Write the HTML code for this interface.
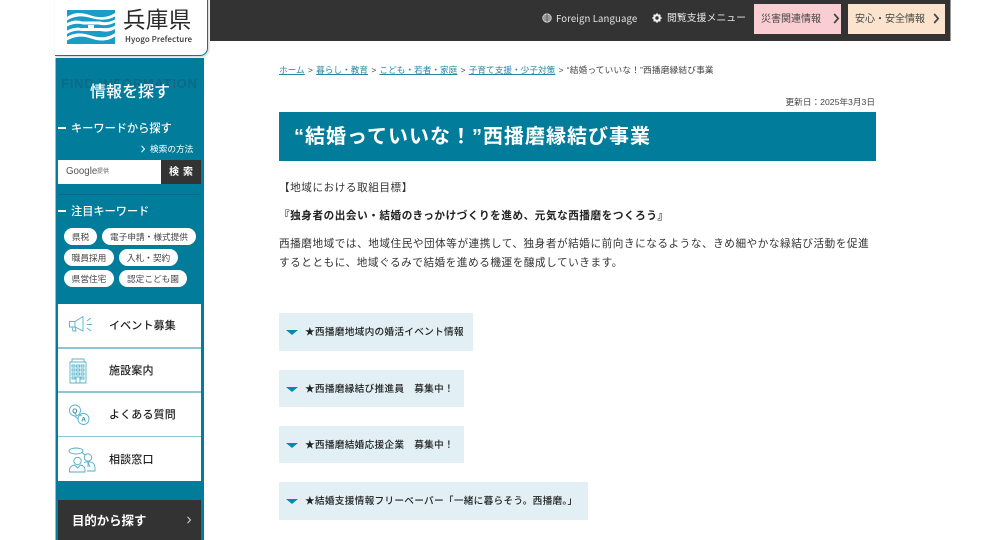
<!DOCTYPE html>
<html lang="ja"><head><meta charset="utf-8"><title>“結婚っていいな！”西播磨縁結び事業</title>
<style>
html,body{margin:0;padding:0;background:#fff}
body{width:1000px;height:540px;overflow:hidden;position:relative;font-family:"Liberation Sans","Noto Sans CJK JP",sans-serif;color:#333}
#w{position:absolute;left:0;top:0;width:1000px;height:540px;overflow:hidden;filter:blur(.3px)}
.a{position:absolute;white-space:nowrap;line-height:1}
.b{position:absolute}
.pill{position:absolute;height:17px;background:#fff;border-radius:9px;font-size:8.67px;line-height:18px;text-align:center;color:#444;white-space:nowrap}
.item{position:absolute;left:279px;background:#e2f0f5}
.item i{position:absolute;left:7px;top:17px;width:0;height:0;border-left:6px solid transparent;border-right:6px solid transparent;border-top:5px solid #0f87a8}
.item span{position:absolute;left:26px;top:1px;line-height:37px;font-size:9.7px;letter-spacing:.24px;font-weight:500;color:#222;white-space:nowrap}
.menu{position:absolute;left:58px;width:143px;background:#fff}
.menu span{position:absolute;left:51px;font-size:11px;font-weight:500;line-height:1;top:17px;color:#222;letter-spacing:.15px;white-space:nowrap}
.bc{left:279px;top:66px;font-size:8.67px;color:#444;word-spacing:.75px}
.bc u{color:#2a86a0}
.bc b{font-weight:400;letter-spacing:.18px}
p{margin:0}
.t{font-size:10.6px;letter-spacing:.56px;color:#333}
</style></head><body><div id="w">

<!-- top bar -->
<div class="b" style="left:210px;top:0;width:740px;height:41px;background:#333"></div>
<div class="b" style="left:950px;top:0;width:1px;height:41px;background:#999"></div>
<svg class="b" style="left:542px;top:13px" width="10" height="10" viewBox="0 0 10 10" fill="none" stroke="#ddd" stroke-width=".9"><circle cx="5" cy="5" r="4.2" fill="#bbb"/><path d="M1 5h8M1.600 3h6.800M1.600 7h6.800M5 .8v8.400" stroke="#333" stroke-width=".6"/></svg>
<div class="a" style="left:556px;top:14px;font-size:9.6px;letter-spacing:.1px;color:#e4e4e4;font-family:'Noto Sans CJK JP',sans-serif">Foreign Language</div>
<svg class="b" style="left:652px;top:13px" width="10" height="10" viewBox="0 0 10 10"><circle cx="5" cy="5" r="2.800" fill="none" stroke="#eee" stroke-width="2.200"/><path d="M5 .3v2M5 7.700v2M.3 5h2M7.700 5h2M1.700 1.700l1.400 1.400M6.900 6.900l1.400 1.400M8.300 1.700L6.900 3.100M3.100 6.900L1.700 8.300" stroke="#eee" stroke-width="1.500"/></svg>
<div class="a" style="left:667px;top:14px;font-size:9.9px;color:#e4e4e4">閲覧支援メニュー</div>
<div class="b" style="left:754px;top:4px;width:87px;height:30px;background:#f9cdd1"></div>
<div class="a" style="left:761px;top:15px;font-size:10px;color:#444">災害関連情報</div>
<svg class="b" style="left:833px;top:13px" width="7" height="11" viewBox="0 0 7 11" fill="none" stroke="#444" stroke-width="1.7"><path d="M1.200 1l4 4.500-4 4.500"/></svg>
<div class="b" style="left:848px;top:4px;width:97px;height:30px;background:#fbe3cd"></div>
<div class="a" style="left:855px;top:15px;font-size:10px;color:#444">安心・安全情報</div>
<svg class="b" style="left:933px;top:13px" width="7" height="11" viewBox="0 0 7 11" fill="none" stroke="#444" stroke-width="1.7"><path d="M1.200 1l4 4.500-4 4.500"/></svg>

<!-- sidebar -->
<div class="b" style="left:55px;top:58px;width:149px;height:482px;background:#017c9b"></div>
<div class="b" style="left:55px;top:58px;width:1px;height:482px;background:#7fc4d6"></div>

<!-- logo card -->
<div class="b" style="left:55px;top:-5px;width:152px;height:60px;background:#fff;border:solid #017c9b;border-width:0 1px 1px 0;border-radius:0 0 8px 0;box-shadow:1px 1px 2px rgba(0,0,0,.2)"></div>
<svg class="b" style="left:67px;top:10px" width="48" height="34" viewBox="0 0 48 34">
<rect width="48" height="34" fill="#1a9cc4"/>
<g fill="#fff">
<path d="M0 7C9 1 16 3 24 5.500S40 8 48 3V6.500C40 11 31 10 24 8S9 5 0 10.500Z"/>
<path d="M0 13C6 10 11 10 15 11.500H33C38 13 43 12 48 9.500V12.500C43 15 37 16 32 14.500H16C10 13 5 14 0 16.500Z"/>
<path d="M0 20.500C5 18 10 17 14 18H21V15H27V18H35C39 18.500 44 18 48 15.500V19C43 22 38 22 33 21H15C10 20 5 21 0 24Z"/>
<path d="M0 27C8 22 16 23 24 25.500S40 28.500 48 23V26.500C40 32 31 31 24 28.500S9 25.500 0 30.500Z"/>
</g></svg>
<div class="a" style="left:123px;top:10px;font-size:22.500px;letter-spacing:.4px;color:#2a2a2a;font-weight:400">兵庫県</div>
<div class="a" style="left:125px;top:36px;font-size:8px;color:#333;font-weight:500;font-family:'Noto Sans CJK JP',sans-serif;letter-spacing:.05px">Hyogo Prefecture</div>

<div class="a" style="left:61px;top:77px;font-size:13px;font-weight:700;letter-spacing:.75px;color:#0b6b86">FIND INFORMATION</div>
<div class="a" style="left:90px;top:85px;font-size:16px;font-weight:500;color:#fff">情報を探す</div>

<div class="b" style="left:58px;top:127px;width:8px;height:2px;background:#fff"></div>
<div class="a" style="left:71px;top:124px;font-size:11.2px;font-weight:500;color:#fff">キーワードから探す</div>
<svg class="b" style="left:140px;top:145px" width="6" height="8" viewBox="0 0 6 8" fill="none" stroke="#fff" stroke-width="1"><path d="M1.500 .8L4.500 4L1.500 7.200"/></svg>
<div class="a" style="left:150px;top:145px;font-size:8.67px;color:#fff">検索の方法</div>

<div class="b" style="left:58px;top:160px;width:103px;height:24px;background:#fff"></div>
<div class="b" style="left:161px;top:160px;width:40px;height:24px;background:#333"></div>
<div class="a" style="left:66px;top:167px;font-size:9.7px;color:#555">Google</div>
<div class="a" style="left:97px;top:169px;font-size:6px;color:#666">提供</div>
<div class="a" style="left:169px;top:168px;font-size:10px;font-weight:700;color:#fff;letter-spacing:.6px">検 索</div>
<div class="b" style="left:58px;top:194px;width:143px;height:1px;background:#0a6a85"></div>

<div class="b" style="left:58px;top:210px;width:8px;height:2px;background:#fff"></div>
<div class="a" style="left:71px;top:207px;font-size:11.2px;font-weight:500;color:#fff">注目キーワード</div>

<div class="pill" style="left:64px;top:228px;width:33px">県税</div>
<div class="pill" style="left:102px;top:228px;width:94px">電子申請・様式提供</div>
<div class="pill" style="left:64px;top:249px;width:50px">職員採用</div>
<div class="pill" style="left:119px;top:249px;width:59px">入札・契約</div>
<div class="pill" style="left:64px;top:270px;width:50px">県営住宅</div>
<div class="pill" style="left:119px;top:270px;width:68px">認定こども園</div>

<div class="b" style="left:58px;top:347px;width:143px;height:134px;background:#8cc6d4"></div>
<div class="menu" style="top:304px;height:43px"><span>イベント募集</span></div>
<div class="menu" style="top:349px;height:42px"><span>施設案内</span></div>
<div class="menu" style="top:393px;height:43px"><span>よくある質問</span></div>
<div class="menu" style="top:437px;height:44px"><span style="top:18px">相談窓口</span></div>

<svg class="b" style="left:68px;top:315px" width="26" height="20" viewBox="0 0 26 20" fill="none" stroke="#57b3ca" stroke-width=".9"><path d="M1.500 6.500H7L15 1.500V16L7 12H1.500Z"/><path d="M7 6.500V12M4 12L5 16H8L7 12"/><path d="M19 6L23 3M19 9.500H24M19 13L23 16"/></svg>
<svg class="b" style="left:69px;top:358px" width="18" height="26" viewBox="0 0 18 26" fill="none" stroke="#57b3ca" stroke-width=".9"><path d="M1 4V25H17V4ZM3 4V1H15V4"/><path d="M3 7h3v2H3zM7.500 7h3v2h-3zM12 7h3v2h-3zM3 11h3v2H3zM7.500 11h3v2h-3zM12 11h3v2h-3zM3 15h3v2H3zM7.500 15h3v2h-3zM12 15h3v2h-3zM3 19h3v2H3zM7 25v-6h4v6M12 19h3v2h-3z"/></svg>
<svg class="b" style="left:68px;top:404px" width="23" height="22" viewBox="0 0 23 22" fill="none" stroke="#57b3ca" stroke-width=".9"><circle cx="7" cy="6.500" r="5.500"/><path d="M11 11L14 12" /><circle cx="15.500" cy="15" r="5.500"/><path d="M10 15L7 12.500" /><text x="4.300" y="9" font-size="6.500" font-weight="700" fill="#2a8aa5" stroke="none" font-family="Liberation Sans">Q</text><text x="13.200" y="17.500" font-size="6.500" font-weight="700" fill="#2a8aa5" stroke="none" font-family="Liberation Sans">A</text></svg>
<svg class="b" style="left:68px;top:447px" width="28" height="26" viewBox="0 0 28 26" fill="none" stroke="#4fadc5" stroke-width=".9"><ellipse cx="8" cy="4" rx="7" ry="3"/><path d="M14 5.500L17 8"/><circle cx="9.500" cy="14" r="3.700"/><path d="M1.500 25V22.500C1.500 20 4 18.500 6.500 18L9.500 21L12.500 18C15 18.500 17 20 17 22.500V25Z"/><circle cx="20" cy="10.500" r="3.700"/><path d="M16 15.500C18 14.500 22 14.500 24 15.500C26 16.500 27 18 27 21V24H19M20 15V20M20 15L22 20"/></svg>

<div class="b" style="left:58px;top:500px;width:143px;height:40px;background:#333"></div>
<div class="a" style="left:72px;top:515px;font-size:12.4px;font-weight:700;color:#fff">目的から探す</div>
<svg class="b" style="left:186px;top:516px" width="6" height="8" viewBox="0 0 6 8" fill="none" stroke="#ddd" stroke-width="1"><path d="M1.500 .8L4.500 4L1.500 7.200"/></svg>

<!-- main -->
<div class="a bc"><u>ホーム</u> &gt; <u>暮らし・教育</u> &gt; <u>こども・若者・家庭</u> &gt; <u>子育て支援・少子対策</u> &gt; <b>“結婚っていいな！”西播磨縁結び事業</b></div>
<div class="a" style="right:125px;top:98px;font-size:8.67px;color:#444">更新日：2025年3月3日</div>
<div class="b" style="left:279px;top:112px;width:597px;height:49px;background:#017c9b"></div>
<div class="a" style="left:294px;top:127px;font-size:20px;letter-spacing:1px;font-weight:700;color:#fff">“結婚っていいな！”西播磨縁結び事業</div>

<div class="a t" style="left:279px;top:183px">【地域における取組目標】</div>
<div class="a t" style="left:279px;top:211px;font-weight:700;color:#222">『独身者の出会い・結婚のきっかけづくりを進め、元気な西播磨をつくろう』</div>
<div class="a t" style="left:279px;top:239px">西播磨地域では、地域住民や団体等が連携して、独身者が結婚に前向きになるような、きめ細やかな緑結び活動を促進</div>
<div class="a t" style="left:279px;top:258px">するとともに、地域ぐるみで結婚を進める機運を醸成していきます。</div>

<div class="item" style="top:313px;width:194px;height:38px"><i></i><span>★西播磨地域内の婚活イベント情報</span></div>
<div class="item" style="top:370px;width:185px;height:37px"><i></i><span>★西播磨縁結び推進員　募集中！</span></div>
<div class="item" style="top:426px;width:185px;height:37px"><i></i><span>★西播磨結婚応援企業　募集中！</span></div>
<div class="item" style="top:482px;width:309px;height:38px"><i></i><span>★結婚支援情報フリーペーパー「一緒に暮らそう。西播磨。」</span></div>
</div></body></html>
